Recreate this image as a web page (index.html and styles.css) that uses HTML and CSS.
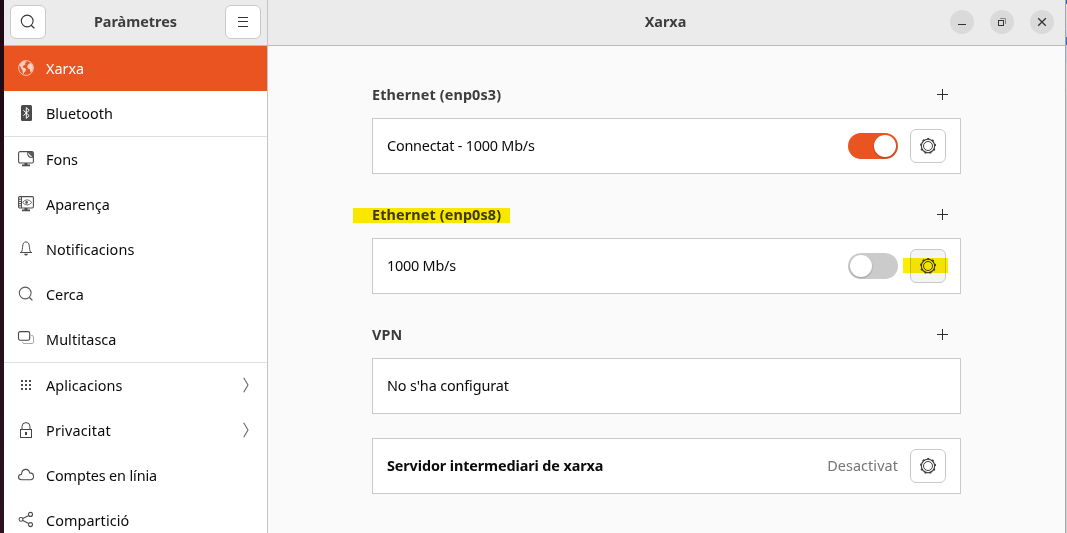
FILE: index.html
```html
<!DOCTYPE html>
<html lang="ca">
<head>
<meta charset="utf-8">
<title>Paràmetres</title>
<link rel="stylesheet" href="styles.css">
</head>
<body>
<svg class="defs" width="0" height="0">
  <symbol id="gear" viewBox="0 0 16 16">
    <circle cx="8" cy="8" r="6.7" fill="none" stroke="#3d3d3d" stroke-width="1.1"/>
    <circle cx="8" cy="8" r="4.5" fill="none" stroke="#3d3d3d" stroke-width="1"/>
    <circle cx="8" cy="8" r="7.3" fill="none" stroke="#3d3d3d" stroke-width="1.4" stroke-dasharray="2 3.096" stroke-dashoffset="12.47"/>
  </symbol>
  <symbol id="search" viewBox="0 0 16 16">
    <circle cx="7.2" cy="7" r="5.9" fill="none" stroke="currentColor" stroke-width="1.1"/>
    <path d="M11.2 11.2L14.4 14.4" stroke="currentColor" stroke-width="1.3" fill="none"/>
  </symbol>
  <symbol id="plus" viewBox="0 0 11 11"><path d="M5.5 0V11M0 5.5H11" stroke="#2e2e2e"/></symbol>
  <symbol id="chevron" viewBox="0 0 6 16"><path d="M.7.7L5 8L.7 15.3" fill="none" stroke="#666" stroke-width="1.1"/></symbol>
</svg>
<div class="window">
  <aside class="sidebar">
    <header class="bar sidebar-bar">
      <button class="btn"><svg class="ico dark"><use href="#search"/></svg></button>
      <h1 class="title">Paràmetres</h1>
      <button class="btn"><svg class="ico" viewBox="0 0 16 16"><path d="M3 3.5H13M3 7.5H13M3 12.5H13" stroke="#333"/></svg></button>
    </header>
    <nav class="nav">
      <a class="item active"><svg class="ico" viewBox="0 0 16 16"><circle cx="8" cy="8" r="7.4" fill="none" stroke="#f9c9b7" stroke-width="1"/><path d="M1.2 5L3 2.6L5.6 1.1L8 1.2L8.4 2.2L7 3L7.6 4.2L6.2 5.2L4.8 6.2L4.6 7.2L6.8 8L8.2 9.4L7.4 11.2L6 12.8L5.8 14.4L4.6 12.6L4.4 10L3 8.6L2.6 6.8ZM9.6 5.2L11.6 3.2L13.4 3.4L15 6.6L14.8 9.4L13.6 11.8L12.4 12.2L11.8 9.2L10 8.4L9.2 6.8Z" fill="#f9cfbf"/></svg><span>Xarxa</span></a>
      <a class="item"><svg class="ico" viewBox="0 0 16 16"><rect x="3" y="0" width="11" height="16" rx="1.5" fill="#4a4a4a"/><path d="M5.3 5.2L11.2 10.7L8.3 13.4V2.6L11.2 5.3L5.3 10.8" fill="none" stroke="#fff" stroke-width="1"/></svg><span>Bluetooth</span></a>
      <a class="item sep"><svg class="ico" viewBox="0 0 16 16"><rect x=".6" y=".6" width="14.8" height="11.4" rx="1.5" fill="none" stroke="#4d4d4d" stroke-width="1.1"/><path d="M9 1H15V7H13C10.5 7 9 5 9 1Z" fill="#5a5a5a"/><path d="M9.8 1.4C10 4.6 11.6 6 14.6 6.2L10.6 2.2Z" fill="#e4e4e4"/><path d="M6.5 12H9.5V13.6H12V15.2H4V13.6H6.5Z" fill="#4d4d4d"/></svg><span>Fons</span></a>
      <a class="item"><svg class="ico" viewBox="0 0 16 16"><rect x=".6" y=".6" width="14.8" height="11.4" rx="1.2" fill="none" stroke="#4d4d4d" stroke-width="1.1"/><path d="M3.5 1V12M1 3.2H3.5M1 5.4H3.5M1 7.6H3.5M1 9.8H3.5" stroke="#4d4d4d" stroke-width="1"/><path d="M4.5 6.4Q9.2 1.2 13.8 6.4Q9.2 11.6 4.5 6.4Z" fill="none" stroke="#5a5a5a" stroke-width=".9"/><circle cx="8.6" cy="6.4" r="1.4" fill="#5a5a5a"/><path d="M6.5 12H9.5V13.6H12V15.2H4V13.6H6.5Z" fill="#4d4d4d"/></svg><span>Aparença</span></a>
      <a class="item"><svg class="ico" viewBox="0 0 16 16"><path d="M2 11.5H14M3.2 11.3C5.6 8.6 3.2 .9 8 .9S10.4 8.6 12.8 11.3" fill="none" stroke="#4d4d4d"/><path d="M6 12.8H10Q9.6 14.6 8 14.6T6 12.8Z" fill="#4d4d4d"/></svg><span class="open">Notificacions</span></a>
      <a class="item"><svg class="ico"><use href="#search"/></svg><span>Cerca</span></a>
      <a class="item"><svg class="ico" viewBox="0 0 16 16"><path d="M13 4.5H14Q15.5 4.5 15.5 6V11Q15.5 12.5 14 12.5H6Q4.5 12.5 4.5 11" fill="none" stroke="#aaa"/><rect x=".5" y=".6" width="11.2" height="8.6" rx="1.6" fill="none" stroke="#444" stroke-width="1.1"/></svg><span class="open">Multitasca</span></a>
      <a class="item sep"><svg class="ico" viewBox="0 0 16 16"><path d="M3 3H5V5H3ZM7 3H9V5H7ZM11 3H13V5H11ZM3 7H5V9H3ZM7 7H9V9H7ZM11 7H13V9H11ZM3 11H5V13H3ZM7 11H9V13H7ZM11 11H13V13H11Z" fill="#4d4d4d"/></svg><span class="open">Aplicacions</span><svg class="chev"><use href="#chevron"/></svg></a>
      <a class="item"><svg class="ico" viewBox="0 0 16 16"><rect x="2.5" y="7.5" width="11" height="8" fill="none" stroke="#444"/><path d="M4 7V4.5Q4 .6 8 .6T12 4.5V7" fill="none" stroke="#444"/><path d="M7 10H9V13H7Z" fill="#444"/></svg><span class="privacy">Privacitat</span><svg class="chev"><use href="#chevron"/></svg></a>
      <a class="item"><svg class="ico" viewBox="0 0 16 16"><path d="M3.6 12.7C-.5 12.7-.5 7.5 3.5 7.2C4 1.1 10.5 .9 11.7 5.9C16.8 6.1 16.6 12.7 12.7 12.7Z" fill="none" stroke="#4d4d4d" stroke-width="1.1"/></svg><span class="tight">Comptes en línia</span></a>
      <a class="item"><svg class="ico" viewBox="0 0 16 16"><g fill="none" stroke="#4d4d4d" stroke-width="1.1"><circle cx="3" cy="7.4" r="1.9"/><circle cx="12.5" cy="2.4" r="2"/><circle cx="12.5" cy="12.6" r="2"/><path d="M4.8 6.4L10.7 3.4M4.8 8.4L10.7 11.6"/></g></svg><span class="open">Compartició</span></a>
    </nav>
  </aside>
  <main class="main">
    <header class="bar main-bar">
      <h2 class="title title-main">Xarxa</h2>
      <div class="controls">
        <button class="ctl"><svg viewBox="0 0 24 24"><path d="M8 14.5H16" stroke="#333"/></svg></button>
        <button class="ctl"><svg viewBox="0 0 24 24"><rect x="8.5" y="10.5" width="5" height="5" fill="none" stroke="#333"/><path d="M10 8.5H15.5V14" fill="none" stroke="#888"/></svg></button>
        <button class="ctl"><svg viewBox="0 0 24 24"><path d="M8.2 8.2L15.8 15.8M15.8 8.2L8.2 15.8" stroke="#333" stroke-width="1.3"/></svg></button>
      </div>
    </header>
    <div class="content">
      <section class="group">
        <div class="group-head"><h3>Ethernet (enp0s3)</h3><svg class="plus"><use href="#plus"/></svg></div>
        <div class="card"><span class="status">Connectat - 1000 Mb/s</span><div class="actions"><span class="switch on"></span><button class="btn"><svg class="ico"><use href="#gear"/></svg></button></div></div>
      </section>
      <section class="group">
        <div class="group-head"><h3 class="marked">Ethernet (enp0s8)</h3><svg class="plus"><use href="#plus"/></svg></div>
        <div class="card"><span class="status">1000 Mb/s</span><div class="actions"><span class="switch"></span><button class="btn hover marked"><svg class="ico"><use href="#gear"/></svg></button></div></div>
      </section>
      <section class="group">
        <div class="group-head"><h3>VPN</h3><svg class="plus"><use href="#plus"/></svg></div>
        <div class="card"><span class="status none">No s'ha configurat</span></div>
      </section>
      <section class="group">
        <div class="card"><b class="proxy">Servidor intermediari de xarxa</b><div class="actions"><span class="state">Desactivat</span><button class="btn"><svg class="ico"><use href="#gear"/></svg></button></div></div>
      </section>
    </div>
  </main>
</div>
<div class="edge"></div>
</body>
</html>
```
FILE: styles.css
```css
* { box-sizing: border-box; }
body {
  margin: 0;
  width: 1067px;
  height: 533px;
  overflow: hidden;
  display: flex;
  background: linear-gradient(#1d0a15, #2b1320);
  font-family: "Noto Sans", sans-serif;
  font-size: 14.4px;
  color: #0a0a0a;
}
.defs { position: absolute; }
svg { display: block; overflow: visible; }
h1, h2, h3 { margin: 0; font-size: inherit; }
span, h1, h2, h3, b { white-space: nowrap; }
.window { display: flex; width: 1061px; height: 533px; margin-left: 4px; }
.edge {
  width: 2px;
  border-left: 1px solid #a5a5a5;
  background: linear-gradient(#1d63c4 0 4px, #dedede 4px 30px, #c8d3ec 30px 37px, #3a6fc4 37px 45px, #c8cfe6 45px 62px, #dadada 62px 90px, #d4d4d4 90px);
}
.sidebar { width: 264px; border-right: 1px solid #c4c4c4; background: #fff; }
.bar {
  display: flex;
  align-items: center;
  height: 46px;
  padding-bottom: 1px;
  background: #ebebeb;
  border-bottom: 1px solid #bbb;
}
.sidebar-bar { justify-content: space-between; padding: 0 6px 1px; }
.title { padding-bottom: 2px; color: #3d3d3d; font-weight: 700; }
.btn {
  display: flex;
  align-items: center;
  justify-content: center;
  width: 36px;
  height: 34px;
  padding: 0;
  border: 1px solid #c9c9c9;
  border-radius: 6px;
  background: #fff;
}
.ico { width: 16px; height: 16px; flex: none; color: #5a5a5a; }
.ico.dark { color: #333; }
.item { display: flex; align-items: center; height: 45px; padding: 0 18px 0 14px; }
.item .ico { margin-bottom: 1px; }
.item span { margin-left: 12px; }
.open { letter-spacing: .08px; }
.privacy { letter-spacing: .2px; }
.tight { letter-spacing: -.12px; }
.item.sep { height: 46px; border-top: 1px solid #dfdfdf; }
.item.active { background: #e95420; color: #fff; }
.chev { width: 6px; height: 16px; margin-left: auto; margin-bottom: 1px; }
.main { flex: 1; background: #fafafa; }
.main-bar { display: grid; grid-template-columns: 1fr auto 1fr; padding-right: 11px; padding-left: 9px; }
.title-main { grid-column: 2; }
.controls { display: flex; justify-content: flex-end; gap: 16px; }
.ctl { width: 24px; height: 24px; padding: 0; border: 0; border-radius: 50%; background: #dadada; }
.content { width: 589px; margin: 35px auto 0; }
.group { margin-bottom: 24px; }
.group-head {
  display: flex;
  align-items: center;
  justify-content: space-between;
  height: 26px;
  margin-bottom: 11px;
  padding-right: 13px;
  color: #3d3d3d;
  letter-spacing: .12px;
}
.group + .group .group-head { margin-top: 27px; }
.plus { width: 11px; height: 11px; }
.card {
  display: flex;
  align-items: center;
  justify-content: space-between;
  height: 56px;
  padding: 0 14px;
  border: 1px solid #c9c9c9;
  background: #fff;
}
.status, .proxy, .state { padding-bottom: 2px; }
.status { letter-spacing: -.21px; }
.status.none { letter-spacing: -.13px; }
.proxy { letter-spacing: -.11px; }
.actions { display: flex; align-items: center; gap: 12px; }
.switch {
  width: 50px;
  height: 26px;
  padding: 2px;
  display: flex;
  border-radius: 13px;
  background: #cbcbcb;
}
.switch::before {
  content: "";
  width: 22px;
  height: 22px;
  border-radius: 50%;
  background: #fff;
  box-shadow: 0 1px 2px rgba(0, 0, 0, .25);
}
.switch.on { justify-content: flex-end; background: #e95420; }
.state { color: #757575; letter-spacing: .08px; }
.hover { background: #f4f4f4; }
.marked { position: relative; }
.marked::after {
  content: "";
  position: absolute;
  left: -19px;
  top: 3px;
  width: 157px;
  height: 15px;
  background: #ffec00;
  mix-blend-mode: multiply;
}
.btn.marked::after { left: -8px; top: 8px; width: 45px; }
```
